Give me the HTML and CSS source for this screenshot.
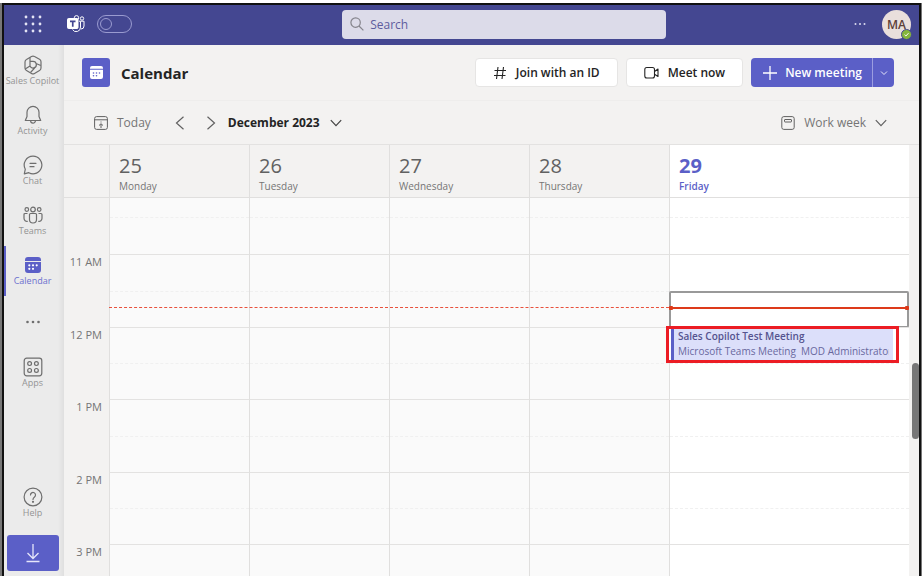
FILE: index.html
```html
<!DOCTYPE html>
<html lang="en">
<head>
<meta charset="utf-8">
<title>Calendar</title>
<link rel="stylesheet" href="styles.css">
</head>
<body>
<div class="window">
  <header class="topbar">
    <div class="top-left">
      <button class="plain" aria-label="App launcher"><svg width="18" height="18" viewBox="0 0 18 18" fill="#e4e4f5"><circle cx="2" cy="2" r="1.4"/><circle cx="9" cy="2" r="1.4"/><circle cx="16" cy="2" r="1.4"/><circle cx="2" cy="9" r="1.4"/><circle cx="9" cy="9" r="1.4"/><circle cx="16" cy="9" r="1.4"/><circle cx="2" cy="16" r="1.4"/><circle cx="9" cy="16" r="1.4"/><circle cx="16" cy="16" r="1.4"/></svg></button>
      <svg class="logo" width="18" height="18" viewBox="0 0 18 18" fill="none" stroke="#fff"><circle cx="9.500" cy="2.800" r="2.200"/><circle cx="15" cy="3.500" r="1.700"/><path d="M12 6.200h5v4.800a3 3 0 0 1-3 3M13.500 6.500v5.500a4.300 4.300 0 0 1-8 2.500"/><rect x="0.500" y="3.500" width="10.500" height="10" rx="1" fill="#fff"/><path d="M3 6.300h5.500M5.750 6.300v5.400" stroke="#444791" stroke-width="1.700"/></svg>
      <button class="switch" role="switch" aria-checked="false" aria-label="New Teams"><span class="knob"></span></button>
    </div>
    <label class="search">
      <svg width="14" height="14" viewBox="0 0 14 14" fill="none" stroke="#85848c" stroke-width="1.200"><circle cx="5.600" cy="5.600" r="4.700"/><path d="M9 9l4.400 4.400"/></svg>
      <input type="search" placeholder="Search" aria-label="Search">
    </label>
    <div class="top-right">
      <button class="plain" aria-label="More options"><svg width="12" height="4" viewBox="0 0 12 4" fill="#dcdcf0"><circle cx="1.500" cy="2" r="1"/><circle cx="6" cy="2" r="1"/><circle cx="10.500" cy="2" r="1"/></svg></button>
      <button class="avatar" aria-label="Account">MA<span class="presence"><svg width="9" height="9" viewBox="0 0 9 9" fill="none" stroke="#fff"><path d="M2.500 4.700l1.400 1.300 2.600-2.800"/></svg></span></button>
    </div>
  </header>
  <div class="shell">
    <nav class="rail">
      <a href="#" class="rail-item"><svg width="20" height="20" viewBox="0 0 20 20" fill="none" stroke="#6e6e6e" stroke-width="1.200" stroke-linejoin="round"><path d="M8.500 1.500q1.500-.9 3 0l5 2.700q1.500.9 1.500 2.500v6.300q0 1.700-1.500 2.500l-5 3q-1.500.9-3 0L3.500 15.600Q2 14.700 2 13V7q0-1.700 1.500-2.500z"/><path d="M7 2.500v8.500a3.300 3.300 0 1 0 3-4.600H7M13 8.500l4.800 2M12 12.600L7.500 17.500M7 11l-4.800 3"/></svg><span>Sales Copilot</span></a>
      <a href="#" class="rail-item"><svg width="20" height="20" viewBox="0 0 20 20" fill="none" stroke="#6e6e6e" stroke-width="1.200" stroke-linejoin="round"><path d="M10 1.300a6 6 0 0 0-6 6v4.200L2.300 15.500h15.400L16 11.500V7.300a6 6 0 0 0-6-6zM7.600 15.700a2.400 2.400 0 0 0 4.800 0"/></svg><span>Activity</span></a>
      <a href="#" class="rail-item"><svg width="20" height="20" viewBox="0 0 20 20" fill="none" stroke="#6e6e6e" stroke-width="1.200" stroke-linejoin="round" stroke-linecap="round"><path d="M10 1.200a8.800 8.800 0 1 1-4.200 16.500L1.300 18.800l1-4.600A8.800 8.800 0 0 1 10 1.200zM7 8.300h6M7 11.700h4"/></svg><span>Chat</span></a>
      <a href="#" class="rail-item"><svg width="20" height="20" viewBox="0 0 20 20" fill="none" stroke="#6e6e6e" stroke-width="1.200" stroke-linejoin="round"><circle cx="10" cy="4.500" r="2.300"/><circle cx="3.800" cy="4.500" r="1.800"/><circle cx="16.200" cy="4.500" r="1.800"/><path d="M7.500 8.500h5a1 1 0 0 1 1 1v5a3.500 3.500 0 0 1-7 0v-5a1 1 0 0 1 1-1zM4.500 8.500H2a1 1 0 0 0-1 1v3.800a3 3 0 0 0 3.700 3M15.500 8.500H18a1 1 0 0 1 1 1v3.800a3 3 0 0 1-3.700 3"/></svg><span>Teams</span></a>
      <a href="#" class="rail-item active" aria-current="page"><svg width="20" height="20" viewBox="0 0 20 20"><path fill="#5b5fc7" d="M5 2h10a3 3 0 0 1 3 3v1H2V5a3 3 0 0 1 3-3zM2 7h16v8a3 3 0 0 1-3 3H5a3 3 0 0 1-3-3z"/><g fill="#fff"><circle cx="6.300" cy="13.800" r="1.100"/><circle cx="10" cy="10.300" r="1.100"/><circle cx="10" cy="13.800" r="1.100"/><circle cx="13.700" cy="10.300" r="1.100"/><circle cx="6.300" cy="10.300" r="1.100"/></g></svg><span>Calendar</span></a>
      <button class="rail-more" aria-label="More apps"><svg width="16" height="4" viewBox="0 0 16 4" fill="#6e6e6e"><circle cx="2.500" cy="2" r="1.300"/><circle cx="8" cy="2" r="1.300"/><circle cx="13.500" cy="2" r="1.300"/></svg></button>
      <a href="#" class="rail-item"><svg width="20" height="20" viewBox="0 0 20 20" fill="none" stroke="#6e6e6e" stroke-width="1.200"><rect x="1.200" y="1.200" width="17.600" height="17.600" rx="2.500"/><circle cx="6.600" cy="6.600" r="1.900"/><circle cx="13.400" cy="6.600" r="1.900"/><circle cx="6.600" cy="13.400" r="1.900"/><circle cx="13.400" cy="13.400" r="1.900"/></svg><span>Apps</span></a>
      <a href="#" class="rail-item help"><svg width="20" height="20" viewBox="0 0 20 20" fill="none" stroke="#6e6e6e" stroke-width="1.200"><circle cx="10" cy="10" r="8.900"/><path d="M7.500 8a2.500 2.500 0 1 1 4 2c-1 .8-1.500 1.200-1.500 2.500" stroke-linecap="round"/><circle cx="10" cy="14.800" r=".5"/></svg><span>Help</span></a>
      <button class="download" aria-label="Download"><svg width="16" height="20" viewBox="0 0 16 20" fill="none" stroke="#e6e6fa" stroke-width="1.300"><path d="M8 1v14M2.500 10L8 15.500 13.500 10M1.500 18.500h13"/></svg></button>
    </nav>
    <main class="main">
      <div class="titlebar">
        <span class="tile"><svg width="15" height="15" viewBox="0 0 15 15"><path fill="#fff" d="M3 1h9a2 2 0 0 1 2 2v.8H1V3a2 2 0 0 1 2-2zM1 4.800h13V12a2 2 0 0 1-2 2H3a2 2 0 0 1-2-2z"/><g fill="#5b5fc7"><circle cx="4.500" cy="10.800" r=".8"/><circle cx="7.500" cy="10.800" r=".8"/><circle cx="4.500" cy="8" r=".8"/><circle cx="7.500" cy="8" r=".8"/><circle cx="10.500" cy="8" r=".8"/></g></svg></span>
        <h1>Calendar</h1>
        <button class="btn"><svg width="14" height="14" viewBox="0 0 14 14" fill="none" stroke="#242424" stroke-width="1.100"><path d="M5 1L3.500 13M10.500 1L9 13M1.500 4.500h11.500M1 9.500h11.500"/></svg>Join with an ID</button>
        <button class="btn"><svg width="15" height="14" viewBox="0 0 15 14" fill="none" stroke="#242424" stroke-width="1.100" stroke-linejoin="round"><rect x=".8" y="1.500" width="9.700" height="10.500" rx="2"/><path d="M10.500 5.500L14 3v7.500L10.500 8.200"/></svg>Meet now</button>
        <div class="split">
          <button class="new"><svg width="14" height="14" viewBox="0 0 14 14" stroke="#fff" stroke-width="1.300"><path d="M7 0v14M0 7h14"/></svg>New meeting</button>
          <button class="caret" aria-label="Meeting options"><svg width="8" height="8" viewBox="0 0 8 8" fill="none" stroke="#e6e6fa"><path d="M1 2.500L4 5.500 7 2.500"/></svg></button>
        </div>
      </div>
      <div class="toolbar">
        <button class="tool"><svg width="14" height="14" viewBox="0 0 14 14" fill="none" stroke="#616161"><rect x=".6" y=".6" width="12.800" height="12.800" rx="2"/><path d="M.6 3.800h12.800M7 5.500v1M7 8v4M5 9.500l2-1.800 2 1.800"/></svg>Today</button>
        <button class="step" aria-label="Previous week"><svg width="10" height="14" viewBox="0 0 10 14" fill="none" stroke="#616161" stroke-width="1.200"><path d="M8.500 .8L1.500 7l7 6.200"/></svg></button>
        <button class="step" aria-label="Next week"><svg width="10" height="14" viewBox="0 0 10 14" fill="none" stroke="#616161" stroke-width="1.200"><path d="M1.500 .8L8.500 7l-7 6.200"/></svg></button>
        <button class="month">December 2023<svg width="12" height="8" viewBox="0 0 12 8" fill="none" stroke="#424242" stroke-width="1.200"><path d="M.8 1.200L6 6.600l5.200-5.400"/></svg></button>
        <button class="tool view"><svg width="14" height="14" viewBox="0 0 14 14" fill="none" stroke="#616161"><rect x=".8" y=".6" width="12.400" height="12.800" rx="2"/><rect x="3.500" y="3.500" width="7" height="2.500" rx=".5"/></svg>Work week<svg width="12" height="8" viewBox="0 0 12 8" fill="none" stroke="#616161" stroke-width="1.200"><path d="M.8 1.200L6 6.600l5.200-5.400"/></svg></button>
      </div>
      <div class="days">
        <div></div>
        <div class="day"><strong>25</strong><span>Monday</span></div>
        <div class="day"><strong>26</strong><span>Tuesday</span></div>
        <div class="day"><strong>27</strong><span>Wednesday</span></div>
        <div class="day"><strong>28</strong><span>Thursday</span></div>
        <div class="day today"><strong>29</strong><span>Friday</span></div>
      </div>
      <div class="schedule">
        <div class="hour first"><div class="time"></div><div class="cell"></div><div class="cell"></div><div class="cell"></div><div class="cell"></div><div class="cell current"></div></div>
        <div class="hour"><div class="time">11 AM</div><div class="cell"></div><div class="cell"></div><div class="cell"></div><div class="cell"></div><div class="cell current"><div class="slot"></div><div class="now-today"></div></div><div class="now"></div></div>
        <div class="hour"><div class="time">12 PM</div><div class="cell"></div><div class="cell"></div><div class="cell"></div><div class="cell"></div><div class="cell current"><div class="highlight"><a href="#" class="event"><b>Sales Copilot Test Meeting</b><span>Microsoft Teams Meeting&nbsp; MOD Administrator</span></a></div></div></div>
        <div class="hour"><div class="time">1 PM</div><div class="cell"></div><div class="cell"></div><div class="cell"></div><div class="cell"></div><div class="cell current"></div></div>
        <div class="hour"><div class="time">2 PM</div><div class="cell"></div><div class="cell"></div><div class="cell"></div><div class="cell"></div><div class="cell current"></div></div>
        <div class="hour last"><div class="time">3 PM</div><div class="cell"></div><div class="cell"></div><div class="cell"></div><div class="cell"></div><div class="cell current"></div></div>
        <div class="thumb"></div>
      </div>
    </main>
  </div>
</div>
</body>
</html>
```
FILE: styles.css
```css
* { box-sizing: border-box; }
body {
  margin: 0;
  height: 100vh;
  padding: 3px 1px 0 2px;
  overflow: hidden;
  background: linear-gradient(#fff 3px, #777 3px);
  font-family: "Open Sans", "Noto Sans", sans-serif;
  font-size: 12px;
  color: #242424;
}
button, input { font: inherit; color: inherit; }
button { border: 0; background: none; padding: 0; cursor: pointer; display: flex; align-items: center; }
a { text-decoration: none; color: inherit; }
svg { display: block; flex: none; }

.window {
  height: 100%;
  display: flex;
  flex-direction: column;
  border: 2px solid #111;
  border-bottom: 0;
  background: #f3f2f1;
}
.topbar {
  height: 40px;
  flex: none;
  display: grid;
  grid-template-columns: 13fr 324px 10fr;
  align-items: center;
  padding: 0 8px 2px 20px;
  background: #444791;
}
.top-left { display: flex; align-items: center; gap: 12px; }
.logo { margin-left: 13px; }
.switch { width: 35px; height: 18px; border: 1px solid #9a9bd0; border-radius: 9px; padding: 0 2px; }
.knob { width: 12px; height: 12px; border: 1px solid #9a9bd0; border-radius: 50%; }
.search {
  height: 29px;
  display: flex;
  align-items: center;
  gap: 6px;
  padding: 0 8px;
  border-radius: 4px;
  background: #dcdbe9;
}
.search input { flex: 1; min-width: 0; border: 0; padding: 0; outline: 0; background: none; }
.search input::placeholder { color: #5d5c9d; opacity: 1; }
.top-right { display: flex; justify-content: flex-end; align-items: center; gap: 16px; }
.avatar {
  position: relative;
  width: 29px;
  height: 29px;
  justify-content: center;
  border-radius: 50%;
  background: #e9dfdc;
  color: #5c4038;
  font-weight: 600;
}
.presence {
  position: absolute;
  right: -1px;
  bottom: -1px;
  border: 1px solid #444791;
  border-radius: 50%;
  background: #85b63c;
}

.shell { flex: 1; min-height: 0; display: flex; }
.rail {
  width: 60px;
  flex: none;
  display: flex;
  flex-direction: column;
  padding: 1px 1px 5px 0;
  background: linear-gradient(90deg, #ebebeb 54px, #dfdfdf);
}
.rail-item {
  height: 50px;
  display: flex;
  flex-direction: column;
  align-items: center;
  justify-content: center;
  border-left: 2px solid transparent;
  padding-right: 4px;
  font-size: 9px;
  line-height: 12px;
  color: #949494;
  white-space: nowrap;
}
.rail-item.active { border-color: #5b5fc7; color: #6c70cf; }
.rail-more { height: 52px; justify-content: center; padding-right: 2px; }
.help { margin-top: auto; }
.download {
  height: 36px;
  margin: 7px 4px 0 3px;
  justify-content: center;
  border-radius: 3px;
  background: #5b5fc7;
}

.main { flex: 1; min-width: 0; display: flex; flex-direction: column; }
.titlebar {
  height: 56px;
  flex: none;
  display: flex;
  align-items: center;
  gap: 8px;
  padding: 0 25px 0 18px;
  border-bottom: 1px solid #eeedec;
}
.tile { width: 28px; height: 29px; display: grid; place-items: center; border-radius: 3px; background: #5b5fc7; }
h1 { margin: 0 auto 0 3px; font-size: 15px; line-height: 20px; font-weight: 700; }
.btn {
  height: 29px;
  gap: 9px;
  padding: 0 17px;
  border: 1px solid #e6e5e4;
  border-radius: 4px;
  background: #fff;
  font-weight: 600;
}
.split { display: flex; height: 29px; border-radius: 4px; background: #5b5fc7; color: #fff; }
.new { gap: 8px; padding: 0 10px 0 12px; font-weight: 600; }
.caret { width: 22px; justify-content: center; border-left: 1px solid #9b9de0; }
.toolbar {
  height: 44px;
  flex: none;
  display: flex;
  align-items: center;
  padding: 0 32px 0 30px;
  border-bottom: 1px solid #e3e2e1;
}
.tool { gap: 9px; color: #757575; }
.step { margin-left: 24px; }
.step + .step { margin-left: 21px; }
.month { gap: 10px; margin-left: 12px; font-weight: 700; }
.view { margin-left: auto; }

.days, .hour {
  display: grid;
  grid-template-columns: 45px repeat(4, minmax(0, 7fr)) minmax(0, 12fr);
  padding-right: 10px;
}
.days { height: 53px; flex: none; border-bottom: 1px solid #e0dfde; }
.day {
  display: flex;
  flex-direction: column;
  padding: 7px 9px 0;
  border-left: 1px solid #e0dfde;
  font-size: 10px;
  line-height: 14px;
  color: #757575;
}
.day strong { font-size: 20px; line-height: 27px; font-weight: 400; color: #616161; }
.day.today { background: #fff; color: #5b5fc7; font-weight: 600; }
.day.today strong { font-weight: 700; color: #5b5fc7; }
.schedule {
  position: relative;
  flex: 1;
  min-height: 0;
  display: grid;
  grid-template-rows: 56px repeat(4, minmax(0, 1fr)) 32px;
}
.hour { position: relative; }
.time { padding: 1px 7px 0 0; text-align: right; font-size: 11px; line-height: 14px; color: #757575; }
.cell {
  position: relative;
  border-left: 1px solid #e0dfde;
  border-top: 1px solid #e3e2e1;
  background: #fafafa;
}
.cell.current { background: #fff; }
.first .cell { border-top: 0; }
.cell::before { content: ""; position: absolute; left: 0; right: 0; top: 50%; border-top: 1px dashed #f0f0f0; }
.first .cell::before { top: 19px; }
.last .cell::before { content: none; }
.slot { position: absolute; inset: 50% 0 -1px -1px; border: 2px solid #999; border-radius: 2px; background: #fff; }
.now { position: absolute; left: 45px; right: 250px; top: 53px; border-top: 1px dashed #e8503c; }
.now-today { position: absolute; left: 0; right: 0; top: 52px; height: 2px; background: #dd3a1a; }
.now-today::before, .now-today::after {
  content: "";
  position: absolute;
  top: -1px;
  left: -1px;
  width: 4px;
  height: 4px;
  border-radius: 1px;
  background: #dd3a1a;
}
.now-today::after { left: auto; right: 0; }
.highlight {
  position: absolute;
  z-index: 1;
  left: -4px;
  right: 10px;
  top: -2px;
  height: 37px;
  border: 3px solid #ec1c24;
  background: #fff;
  padding-right: 3px;
}
.event {
  height: 31px;
  display: flex;
  flex-direction: column;
  margin-left: 2px;
  padding: 0 4px;
  border-left: 3px solid #5b5fc7;
  background: #dcdffa;
  color: #55538f;
  font-size: 10px;
  line-height: 15px;
  white-space: nowrap;
}
.event b { font-weight: 600; }
.event span { overflow: hidden; color: #69689e; }
.thumb { position: absolute; right: 0; top: 165px; width: 7px; height: 76px; border-radius: 4px; background: #777; }
```
